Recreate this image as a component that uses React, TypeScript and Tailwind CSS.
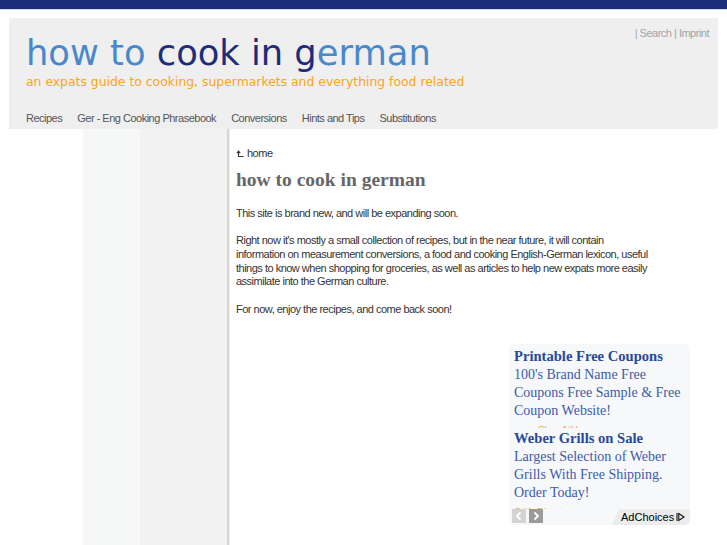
export default function App() {
  const nav = ["Recipes", "Ger - Eng Cooking Phrasebook", "Conversions", "Hints and Tips", "Substitutions"];
  const ads = [
    { title: "Printable Free Coupons", body: "100's Brand Name Free Coupons Free Sample & Free Coupon Website!", url: "www.ShopAtHome.com" },
    { title: "Weber Grills on Sale", body: "Largest Selection of Weber Grills With Free Shipping. Order Today!", url: "GrillsDirect.com" },
  ];
  return (
    <div className="w-[727px] h-[545px] overflow-hidden bg-white flex flex-col font-['Liberation_Sans',Arial,sans-serif]">
      <div className="h-[9px] bg-[#1b2e7a] shrink-0" />
      <div className="h-px bg-[#cdd7ee] shrink-0" />
      <div className="h-[8px] shrink-0" />
      <header className="ml-[9px] w-[709px] h-[111px] shrink-0 bg-[#efefef] flex flex-col pt-[9px] pl-[17px] pr-[9px]">
        <div className="flex justify-between items-start">
          <div className="mt-[5px]">
            <div className="font-['DejaVu_Sans',sans-serif] text-[35.3px] leading-[42px] whitespace-nowrap">
              <span className="text-[#4a88cc]">how to </span>
              <span className="text-[#1d2d7c]">cook in g</span>
              <span className="text-[#4a88cc]">erman</span>
            </div>
            <div className="font-['DejaVu_Sans',sans-serif] text-[12.4px] leading-[15px] text-[#f5a623] whitespace-nowrap">
              an expats guide to cooking, supermarkets and everything food related
            </div>
          </div>
          <div className="text-[11px] leading-[13px] tracking-[-0.5px] text-[#a3a3a3] whitespace-nowrap">
            | Search | Imprint
          </div>
        </div>
        <nav className="mt-[23px] flex gap-[15px] text-[11px] leading-[13px] tracking-[-0.5px] text-[#555]">
          {nav.map((n) => (
            <span key={n} className="whitespace-nowrap">{n}</span>
          ))}
        </nav>
      </header>
      <div className="flex flex-1 min-h-0">
        <div className="w-[83px] shrink-0" />
        <div className="w-[57px] shrink-0 bg-[#f6f7f7]" />
        <div className="w-[87px] shrink-0 bg-[#f2f2f2]" />
        <div className="w-[2px] shrink-0 bg-[#dcd6d1]" />
        <div className="w-px shrink-0 bg-[#f0eeec]" />
        <main className="w-[460px] shrink-0 pl-[6px] pt-[18px] flex flex-col">
          <div className="flex items-center gap-[3px] text-[11px] leading-[13px] tracking-[-0.5px] text-[#333]">
            <svg width="8" height="8" viewBox="0 0 8 8" className="shrink-0">
              <path d="M2.5 1.2V6.5H7.5M0.8 3.2L2.5 1.2L4.2 3.2" fill="none" stroke="#333" strokeWidth="1.1" />
            </svg>
            <span>home</span>
          </div>
          <h1 className="mt-[8px] font-['Liberation_Serif','Times_New_Roman',serif] font-bold text-[19.5px] leading-[24px] text-[#666]">
            how to cook in german
          </h1>
          <div className="mt-[15px] w-[418px] text-[11px] leading-[13.67px] tracking-[-0.5px] text-[#333] flex flex-col gap-[13.67px]">
            <p>This site is brand new, and will be expanding soon.</p>
            <p>
              Right now it's mostly a small collection of recipes, but in the near future, it will contain information on
              measurement conversions, a food and cooking English-German lexicon, useful things to know when shopping for
              groceries, as well as articles to help new expats more easily assimilate into the German culture.
            </p>
            <p>For now, enjoy the recipes, and come back soon!</p>
          </div>
          <div className="ml-auto mt-[28px] w-[181px] h-[181px] shrink-0 rounded-[5px] bg-[#f6f8f9] flex flex-col pt-[2px] overflow-hidden">
            <div className="h-[163px] overflow-hidden pl-[5px] pr-[4px] font-['Liberation_Serif','Times_New_Roman',serif]">
              {ads.map((a) => (
                <div key={a.title} className="h-[82px] overflow-hidden">
                  <div className="text-[14.6px] leading-[20px] font-bold text-[#284997] whitespace-nowrap">{a.title}</div>
                  <div className="text-[14px] leading-[18px] text-[#3d5ba9]">{a.body}</div>
                  <div className="mt-[5px] text-[10px] leading-[12px] text-[#f2a93b] font-['Liberation_Sans',Arial,sans-serif]">{a.url}</div>
                </div>
              ))}
            </div>
            <div className="h-[16px] flex items-start justify-between">
              <div className="flex gap-[3px] pl-[3px]">
                <div className="w-[14px] h-[14px] bg-[#d3d3d3] flex items-center justify-center">
                  <svg width="8" height="10" viewBox="0 0 8 10">
                    <path d="M5.5 1.5L2 5L5.5 8.5" fill="none" stroke="#fff" strokeWidth="1.8" />
                  </svg>
                </div>
                <div className="w-[14px] h-[14px] bg-[#9b9b9b] flex items-center justify-center">
                  <svg width="8" height="10" viewBox="0 0 8 10">
                    <path d="M2.5 1.5L6 5L2.5 8.5" fill="none" stroke="#fff" strokeWidth="1.8" />
                  </svg>
                </div>
              </div>
              <div className="h-[16px] w-[78px] bg-[#ececec] [clip-path:polygon(7px_0,100%_0,100%_100%,0_100%)] flex items-center gap-[2px] pl-[9px] text-[11px] leading-[13px] text-black">
                <span>AdChoices</span>
                <svg width="9" height="10" viewBox="0 0 9 10">
                  <path d="M1 1V9M2.8 1.5L8 5L2.8 8.5Z" fill="none" stroke="#111" strokeWidth="1.1" />
                </svg>
              </div>
            </div>
          </div>
        </main>
      </div>
    </div>
  );
}
